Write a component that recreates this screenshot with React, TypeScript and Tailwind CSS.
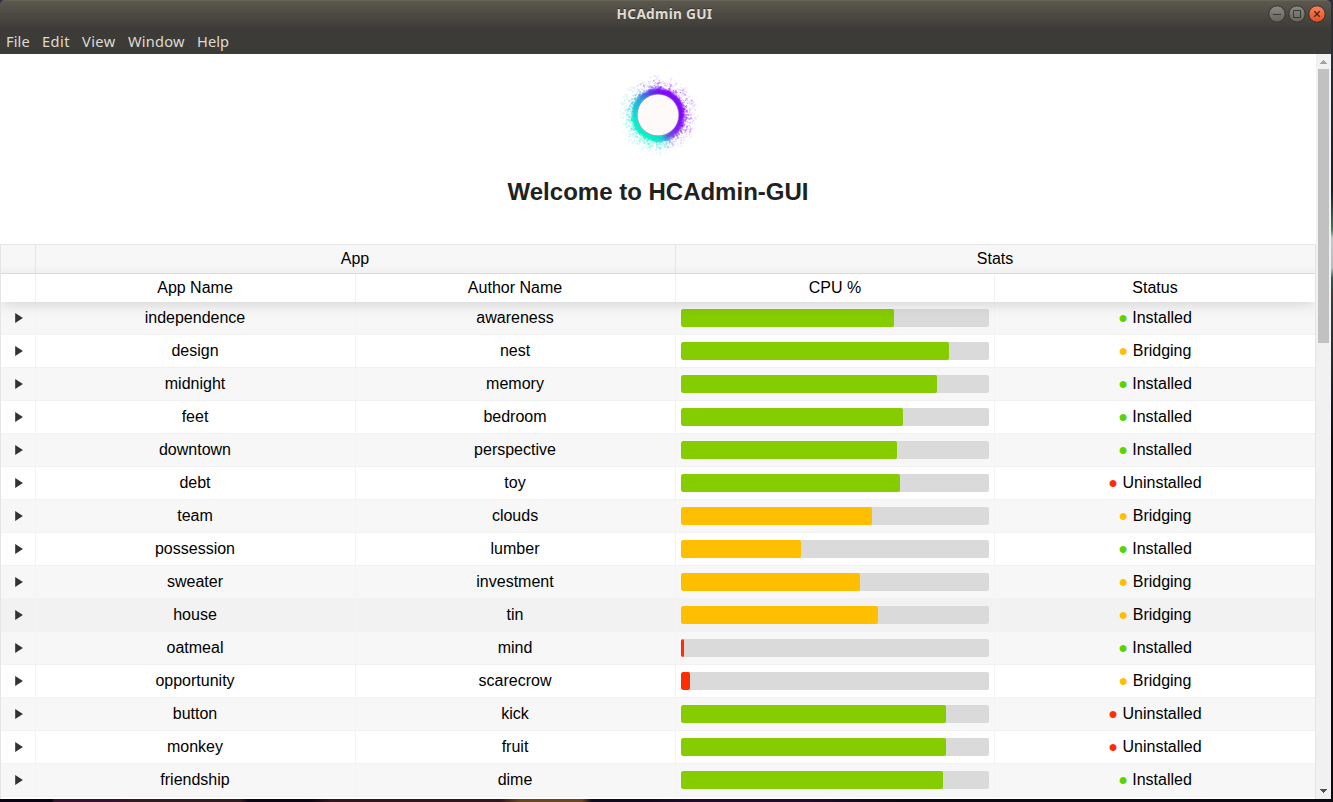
import React from "react";

type Status = "Installed" | "Bridging" | "Uninstalled";
type Row = { name: string; author: string; cpu: number; status: Status };

const rows: Row[] = [
  { name: "independence", author: "awareness", cpu: 213, status: "Installed" },
  { name: "design", author: "nest", cpu: 268, status: "Bridging" },
  { name: "midnight", author: "memory", cpu: 256, status: "Installed" },
  { name: "feet", author: "bedroom", cpu: 222, status: "Installed" },
  { name: "downtown", author: "perspective", cpu: 216, status: "Installed" },
  { name: "debt", author: "toy", cpu: 219, status: "Uninstalled" },
  { name: "team", author: "clouds", cpu: 191, status: "Bridging" },
  { name: "possession", author: "lumber", cpu: 120, status: "Installed" },
  { name: "sweater", author: "investment", cpu: 179, status: "Bridging" },
  { name: "house", author: "tin", cpu: 197, status: "Bridging" },
  { name: "oatmeal", author: "mind", cpu: 3, status: "Installed" },
  { name: "opportunity", author: "scarecrow", cpu: 9, status: "Bridging" },
  { name: "button", author: "kick", cpu: 265, status: "Uninstalled" },
  { name: "monkey", author: "fruit", cpu: 265, status: "Uninstalled" },
  { name: "friendship", author: "dime", cpu: 262, status: "Installed" },
];

const HOVERED = 9;

const statusColor: Record<Status, string> = {
  Installed: "text-[#57d500]",
  Bridging: "text-[#ffbf00]",
  Uninstalled: "text-[#ff2e00]",
};

const barColor = (w: number) =>
  w > 203 ? "bg-[#85cc00]" : w > 101 ? "bg-[#ffbf00]" : "bg-[#ff2e00]";

const grid = "grid grid-cols-[35px_320px_320px_319px_1fr]";

function ringColor(angle: number): string {
  // angle in degrees, clockwise from the right
  const stops: [number, number, number, number][] = [
    [0, 132, 0, 255],
    [40, 125, 30, 245],
    [62, 90, 90, 225],
    [80, 10, 215, 205],
    [110, 0, 242, 195],
    [170, 0, 235, 205],
    [215, 30, 175, 220],
    [250, 90, 50, 240],
    [280, 130, 0, 255],
    [360, 132, 0, 255],
  ];
  for (let i = 1; i < stops.length; i++) {
    if (angle <= stops[i][0]) {
      const a = stops[i - 1];
      const b = stops[i];
      const t = (angle - a[0]) / (b[0] - a[0]);
      const c = [1, 2, 3].map((k) => Math.round(a[k] + (b[k] - a[k]) * t));
      return `rgb(${c.join(",")})`;
    }
  }
  return "rgb(132,0,255)";
}

function Logo() {
  let seed = 77;
  const rnd = () => {
    seed = (seed * 16807) % 2147483647;
    return seed / 2147483647;
  };
  const specks: React.ReactElement[] = [];
  for (let i = 0; i < 1500; i++) {
    const deg = rnd() * 360;
    const r = 25 + Math.pow(rnd(), 1.9) * 15;
    const rad = (deg * Math.PI) / 180;
    const o = Math.max(0.06, 0.42 - (r - 25) * 0.025) * (0.3 + rnd() * 0.7);
    const size = rnd() > 0.7 ? 2 : 1.2;
    specks.push(
      <rect
        key={i}
        x={Math.floor(50 + r * Math.cos(rad))}
        y={Math.floor(50 + r * Math.sin(rad))}
        width={size}
        height={size}
        fill={ringColor(deg)}
        opacity={o}
      />
    );
  }
  const arcs: React.ReactElement[] = [];
  for (let d = 0; d < 360; d += 5) {
    const a = (d * Math.PI) / 180;
    const b = ((d + 6) * Math.PI) / 180;
    arcs.push(
      <path
        key={d}
        d={`M${50 + 23 * Math.cos(a)} ${50 + 23 * Math.sin(a)}A23 23 0 0 1 ${50 + 23 * Math.cos(b)} ${50 + 23 * Math.sin(b)}`}
        stroke={ringColor(d)}
        strokeWidth="6.4"
        fill="none"
      />
    );
  }
  return (
    <svg width="100" height="100" viewBox="0 0 100 100">
      <defs>
        <filter id="soft" x="-20%" y="-20%" width="140%" height="140%">
          <feGaussianBlur stdDeviation="1.1" />
        </filter>
        <filter id="speck" x="-10%" y="-10%" width="120%" height="120%">
          <feGaussianBlur stdDeviation="0.35" />
        </filter>
      </defs>
      <g filter="url(#speck)">{specks}</g>
      <g filter="url(#soft)">{arcs}</g>
      <circle cx="50" cy="50" r="20.8" fill="#fffafa" stroke="#605080" strokeOpacity="0.45" strokeWidth="0.9" />
    </svg>
  );
}

function WindowButton({ kind }: { kind: "min" | "max" | "close" }) {
  const close = kind === "close";
  return (
    <svg width="20" height="20" viewBox="0 0 20 20">
      <defs>
        <linearGradient id={`g-${kind}`} x1="0" y1="0" x2="0" y2="1">
          <stop offset="0" stopColor={close ? "#f9835c" : "#8c8a83"} />
          <stop offset="1" stopColor={close ? "#e4501d" : "#64625b"} />
        </linearGradient>
      </defs>
      <circle cx="10" cy="10" r="8.2" fill={`url(#g-${kind})`} stroke="#33322e" strokeWidth="1" />
      {kind === "min" && <path d="M6 10.5h8" stroke="#393833" strokeWidth="1" />}
      {kind === "max" && <path d="M6.5 6.5h7v7h-7z" stroke="#393833" strokeWidth="1" fill="none" />}
      {close && <path d="M7.3 7.3l5.4 5.4M12.7 7.3l-5.4 5.4" stroke="#4a2416" strokeWidth="1.3" />}
    </svg>
  );
}

export default function App() {
  return (
    <div className="flex h-[802px] w-[1333px] flex-col overflow-hidden bg-[linear-gradient(90deg,#0a0212_0_52px,#38102f_54px_112px,#321b20_140px_240px,#0c0410_248px_310px,#32151d_330px_500px,#6b4420_520px_582px,#10081c_592px_640px,#220c2e_700px_800px,#0c0811_900px_1333px)] font-['Liberation_Sans',Arial,sans-serif]">
      <div className="flex h-[799px] w-full bg-[linear-gradient(180deg,#30303e_0,#1c1b26_190px,#3f7a60_230px,#c2c9c8_238px,#b5bdbc_268px,#2c5a50_278px,#3a3c3c_295px,#2b2b2e_350px,#0d0814_450px)]">
        <div className="flex w-[1331px] flex-col">
          <header className="flex h-[54px] shrink-0 flex-col rounded-t-[5px] border-t border-[#68645a] bg-[linear-gradient(180deg,#5b584e_0,#3d3b37_28px,#3c3b37_100%)] font-['Noto_Sans','Open_Sans',sans-serif]">
            <div className="grid h-[26px] grid-cols-[1fr_auto_1fr] items-center">
              <span />
              <h1 className="pr-0.5 text-[13.7px] leading-[24px] font-bold tracking-[0.27px] text-[#dfdbd2] [text-shadow:0_-1px_0_#34332f]">HCAdmin GUI</h1>
              <div className="flex justify-end pr-1">
                <WindowButton kind="min" />
                <WindowButton kind="max" />
                <WindowButton kind="close" />
              </div>
            </div>
            <nav className="flex h-[27px] items-center pl-1.5 text-[14.6px] leading-[26px] tracking-[0.1px] text-[#dfdbd2]">
              <span className="w-9">File</span>
              <span className="w-10 tracking-[0.5px]">Edit</span>
              <span className="w-[46px] tracking-[0.4px]">View</span>
              <span className="w-[69px] tracking-[0.25px]">Window</span>
              <span>Help</span>
            </nav>
          </header>

          <div className="flex min-h-0 flex-1 bg-white">
            <main className="flex w-[1316px] flex-col overflow-hidden">
              <div className="flex h-[190px] shrink-0 flex-col items-center pt-[11px]">
                <Logo />
                <h2 className="mt-[11px] text-2xl leading-8 font-bold text-[#212121]">Welcome to HCAdmin-GUI</h2>
              </div>

              <section className="flex min-h-0 flex-1 flex-col border-x border-t border-[#e5e5e5] text-base text-black">
                <div className="grid h-[29px] shrink-0 grid-cols-[35px_640px_1fr] border-b border-[#dcdcdc] bg-[linear-gradient(180deg,#f7f7f7_0_21px,#f0f0f0_100%)] text-center leading-[27px]">
                  <div className="border-r border-[#e6e6e6]" />
                  <div className="border-r border-[#e6e6e6] pr-px">App</div>
                  <div className="pr-px">Stats</div>
                </div>
                <div className={`${grid} z-10 h-[28px] shrink-0 bg-white text-center leading-[27px] shadow-[0_2px_15px_0_rgba(0,0,0,0.15)] [clip-path:inset(0_0_-20px_0)]`}>
                  <div className="border-r border-[#f2f2f2]" />
                  <div className="border-r border-[#f2f2f2] pr-px">App Name</div>
                  <div className="border-r border-[#f2f2f2] pr-px">Author Name</div>
                  <div className="border-r border-[#f2f2f2]">CPU %</div>
                  <div>Status</div>
                </div>
                <div className="flex min-h-0 flex-1 flex-col overflow-hidden">
                  {rows.map((r, i) => (
                    <div
                      key={r.name}
                      className={`${grid} h-[33px] shrink-0 border-b border-[#f2f2f2] text-center leading-8 ${
                        i === HOVERED ? "bg-[#f2f2f2]" : i % 2 === 0 ? "bg-[#f7f7f7]" : "bg-white"
                      }`}
                    >
                      <div className="flex items-center border-r border-[#f4f4f4] pl-3.5">
                        <svg width="8" height="10" viewBox="0 0 8 10">
                          <path d="M.2 0L7.9 5L.2 10z" fill="#333333" />
                        </svg>
                      </div>
                      <div className="border-r border-[#f4f4f4] pr-px">{r.name}</div>
                      <div className="border-r border-[#f4f4f4] pr-px">{r.author}</div>
                      <div className="border-r border-[#f4f4f4] px-[5px] pt-[7px]">
                        <div className="h-[18px] overflow-hidden rounded-[2px] bg-[#dadada]">
                          <div className={`h-full rounded-[2px] ${barColor(r.cpu)}`} style={{ width: r.cpu }} />
                        </div>
                      </div>
                      <div>
                        <span className={statusColor[r.status]}>●</span> {r.status}
                      </div>
                    </div>
                  ))}
                  <div className="flex-1 bg-white" />
                </div>
              </section>
            </main>

            <aside className="flex w-[15px] flex-col items-center bg-[#f1f1f1]">
              <svg className="shrink-0" width="15" height="15" viewBox="0 0 15 15">
                <path d="M4 10h7v-1h-1v-1h-1v-1h-1v-1h-1v1h-1v1h-1v1h-1z" fill="#a3a3a3" />
              </svg>
              <div className="h-[274px] w-[11px] bg-[#c1c1c1]" />
              <svg className="mt-auto shrink-0" width="15" height="15" viewBox="0 0 15 15">
                <path d="M4 5h7v1h-1v1h-1v1h-1v1h-1v-1h-1v-1h-1v-1h-1z" fill="#505050" />
              </svg>
            </aside>
          </div>
        </div>
      </div>
    </div>
  );
}
